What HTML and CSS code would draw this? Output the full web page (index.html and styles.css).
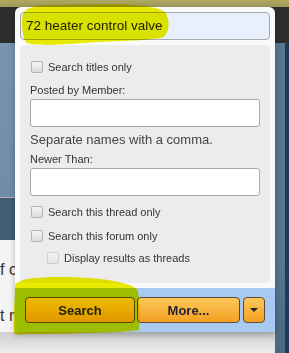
FILE: index.html
```html
<!DOCTYPE html>
<html lang="en">
<head>
    <meta charset="UTF-8">
    <title>Search</title>
    <link rel="stylesheet" href="styles.css">
</head>
<body>
    <div class="page">
        <div class="page-col page-main">
            <div class="topbar"></div>
            <div class="navbar"></div>
            <div class="header"></div>
            <div class="subnav"></div>
            <div class="content">
                <p class="line">f c</p>
                <p class="line">t r</p>
            </div>
            <div class="content-foot"></div>
        </div>
        <div class="page-col page-side">
            <div class="topbar"></div>
            <div class="navbar"></div>
            <div class="side-fill"></div>
        </div>
        <div class="page-col page-edge">
            <div class="topbar"></div>
            <div class="navbar"></div>
            <div class="edge-fill"></div>
        </div>
    </div>

    <div class="popup">
        <div class="query-input">72 heater control valve</div>

        <div class="options">
            <div class="check-row first">
                <span class="check"></span>
                <span>Search titles only</span>
            </div>

            <div class="label posted">Posted by Member:</div>
            <div class="text-box"></div>
            <div class="hint">Separate names with a comma.</div>

            <div class="label newer">Newer Than:</div>
            <div class="text-box"></div>

            <div class="check-row thread">
                <span class="check"></span>
                <span>Search this thread only</span>
            </div>
            <div class="check-row forum">
                <span class="check"></span>
                <span>Search this forum only</span>
            </div>
            <div class="check-row sub">
                <span class="check disabled"></span>
                <span>Display results as threads</span>
            </div>
        </div>

        <div class="footer">
            <button class="btn btn-search">Search</button>
            <button class="btn btn-more">More...</button>
            <button class="btn btn-menu"><span class="arrow"></span></button>
        </div>
    </div>

    <!-- marker highlights drawn over the screenshot -->
    <svg class="marker" width="289" height="353" viewBox="0 0 289 353">
        <path d="M23,14 C25,8 34,6 44,5 L120,4 C142,5 158,7 165,12 C170,19 170,30 164,37 C150,41 112,41 82,43 C60,45 36,46 27,43 C22,39 21,22 23,14 Z"/>
        <path d="M15,285 C18,281 25,279 34,278 C50,277 70,276 100,279 C118,281 130,284 137,289 C140,296 140,318 139,330 C120,333 60,334 30,334 C22,334 16,336 14,333 C13,318 15,300 15,285 Z"/>
    </svg>
</body>
</html>
```

FILE: styles.css
```css
body {
    margin: 0;
    width: 289px;
    height: 353px;
    overflow: hidden;
    position: relative;
    font-family: "Liberation Sans", Arial, sans-serif;
    color: #333;
}

/* page behind the popup */
.page {
    display: flex;
    height: 353px;
}
.page-col {
    display: flex;
    flex-direction: column;
}
.page-main {
    width: 275px;
}
.page-side {
    width: 10px;
}
.page-edge {
    width: 4px;
}
.topbar {
    height: 7px;
    background: linear-gradient(#b0a962, #9e985a);
}
.navbar {
    height: 36px;
    background: #2d2d2d;
}
.header {
    height: 154px;
    background: linear-gradient(#7894b0, #6f8ca8);
    border-bottom: 1px solid #bfaeb6;
}
.subnav {
    height: 42px;
    background: #415c74;
}
.content {
    height: 92px;
    background: #f4f4f4;
    padding-top: 20px;
    box-sizing: border-box;
}
.line {
    margin: 0 0 26px;
    font-size: 16px;
    line-height: 20px;
    color: #333;
}
.content-foot {
    flex: 1;
    background: linear-gradient(#cfcfcf, #ececec);
}
.side-fill {
    flex: 1;
    background: linear-gradient(#587792, #587792 70%, #4b6883);
}
.edge-fill {
    flex: 1;
    background: #1e3c5a;
}

/* search popup */
.popup {
    position: absolute;
    left: 15px;
    top: 7px;
    width: 260px;
    height: 325px;
    box-sizing: border-box;
    padding-top: 5px;
    background: #f9fafc;
    border-radius: 6px 6px 0 0;
    box-shadow: 0 3px 6px rgba(0, 0, 0, 0.25);
    display: flex;
    flex-direction: column;
}
.query-input {
    margin: 0 5px 0 5px;
    height: 28px;
    box-sizing: border-box;
    padding: 0 5px;
    border: 1px solid #a9a9a9;
    border-radius: 4px;
    background: #e8f0fe;
    font-size: 13.5px;
    line-height: 26px;
    color: #222;
}
.options {
    margin: 5px 5px 0;
    height: 238px;
    box-sizing: border-box;
    padding: 15px 10px 0;
    background: #ececec;
    border-radius: 5px;
    font-size: 11px;
}
.check-row {
    display: flex;
    align-items: center;
    gap: 5px;
    height: 14px;
    line-height: 14px;
}
.check {
    width: 12px;
    height: 12px;
    margin-left: 1px;
    box-sizing: border-box;
    border: 1px solid #b3b3b3;
    border-radius: 2px;
    background: linear-gradient(#f6f6f6, #dadada);
}
.check.disabled {
    border-color: #cfcfcf;
    background: linear-gradient(#f2f2f2, #e4e4e4);
}
.label {
    line-height: 14px;
}
.posted {
    margin-top: 9px;
}
.newer {
    margin-top: 4px;
}
.text-box {
    margin-top: 2px;
    height: 28px;
    box-sizing: border-box;
    border: 1px solid #a9a9a9;
    border-radius: 3px;
    background: #fff;
}
.hint {
    margin-top: 5px;
    font-size: 13px;
    line-height: 16px;
    color: #444;
}
.thread {
    margin-top: 9px;
}
.forum {
    margin-top: 10px;
}
.sub {
    margin-top: 8px;
    padding-left: 16px;
}

.footer {
    margin-top: 5px;
    height: 44px;
    box-sizing: border-box;
    padding: 9px 10px;
    background: #a8caf1;
    display: flex;
}
.btn {
    height: 26px;
    padding: 0;
    border: 1px solid #5a4c3c;
    border-radius: 4px;
    background: linear-gradient(#fcc85a, #f49f22);
    font-family: "Liberation Sans", Arial, sans-serif;
    font-size: 13px;
    font-weight: bold;
    color: #232634;
    cursor: pointer;
}
.btn-search {
    width: 110px;
}
.btn-more {
    width: 103px;
    margin-left: 2px;
}
.btn-menu {
    width: 22px;
    margin-left: 3px;
    display: flex;
    align-items: center;
    justify-content: center;
}
.arrow {
    width: 0;
    height: 0;
    border-left: 4px solid transparent;
    border-right: 4px solid transparent;
    border-top: 4px solid #222;
}

.marker {
    position: absolute;
    left: 0;
    top: 0;
    pointer-events: none;
    mix-blend-mode: multiply;
}
.marker path {
    fill: #eef000;
}
```
